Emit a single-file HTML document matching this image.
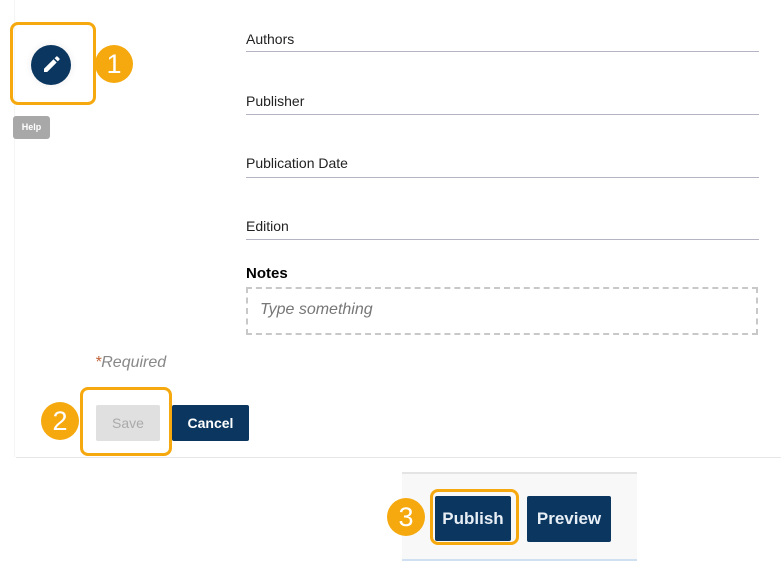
<!DOCTYPE html>
<html><head><style>
body{margin:0;width:781px;height:561px;background:#fff;font-family:"Liberation Sans",sans-serif;position:relative;overflow:hidden}
.a{position:absolute}
.lbl{position:absolute;left:246px;font-size:14px;color:#222}
.ln{position:absolute;left:246px;width:513px;height:1px;background:#b4b4c2}
.badge{position:absolute;width:38px;height:38px;border-radius:50%;background:#f6a90f;color:#fff;font-size:27px;text-align:center;line-height:38px}
.ob{position:absolute;border:3px solid #f6a90f;border-radius:8px}
</style></head><body>
<div class="a" style="left:14px;top:0;width:1px;height:457px;background:#f5f5f5"></div>
<div class="a" style="left:16px;top:457px;width:765px;height:1px;background:#e6e6e6"></div>
<div class="ob" style="left:10px;top:22px;width:80px;height:77px"></div>
<div class="a" style="left:31px;top:45px;width:40px;height:40px;border-radius:50%;background:#0a365f;box-shadow:0 0 8px rgba(0,0,0,.08)">
<svg width="40" height="40" viewBox="0 0 40 40"><path d="M13 27v-3.2l9.5-9.5 3.2 3.2L16.2 27z M23.6 13.2l1.6-1.6a1 1 0 0 1 1.4 0l1.8 1.8a1 1 0 0 1 0 1.4l-1.6 1.6z" fill="#fff"/></svg></div>
<div class="badge" style="left:95px;top:45px">1</div>
<div class="a" style="left:13px;top:116px;width:37px;height:23px;background:#a8a8a8;border-radius:3px;color:#fff;font-size:9px;font-weight:bold;text-align:center;line-height:23px">Help</div>
<div class="lbl" style="top:31px">Authors</div><div class="ln" style="top:51px"></div>
<div class="lbl" style="top:93px">Publisher</div><div class="ln" style="top:114px"></div>
<div class="lbl" style="top:155px">Publication Date</div><div class="ln" style="top:177px"></div>
<div class="lbl" style="top:218px">Edition</div><div class="ln" style="top:239px"></div>
<div class="lbl" style="top:265px;font-weight:bold;font-size:15px;color:#000">Notes</div>
<div class="a" style="left:246px;top:287px;width:508px;height:44px;border:2px dashed #c8c8c8;"></div>
<div class="a" style="left:260px;top:301px;font-size:16px;font-style:italic;color:#777">Type something</div>
<div class="a" style="left:95px;top:354px;font-size:16px;font-style:italic;color:#888"><span style="color:#c0623a">*</span>Required</div>
<div class="ob" style="left:80px;top:387px;width:86px;height:63px"></div>
<div class="a" style="left:96px;top:405px;width:64px;height:36px;background:#e0e0e0;color:#aaa;font-size:14px;text-align:center;line-height:36px;border-radius:2px">Save</div>
<div class="a" style="left:172px;top:405px;width:77px;height:36px;background:#0a365f;color:#fff;font-size:14px;font-weight:bold;text-align:center;line-height:36px;border-radius:2px">Cancel</div>
<div class="badge" style="left:41px;top:402px">2</div>
<div class="a" style="left:402px;top:472px;width:235px;height:85px;background:#f8f8f8;border-top:2px solid #e4e4e4;border-bottom:2px solid #cfe0f0"></div>
<div class="ob" style="left:430px;top:489px;width:83px;height:50px"></div>
<div class="a" style="left:435px;top:496px;width:76px;height:45px;background:#0a365f;color:#e8eef5;font-size:17px;font-weight:bold;text-align:center;line-height:45px;border-radius:2px">Publish</div>
<div class="a" style="left:527px;top:496px;width:84px;height:46px;background:#0a365f;color:#e8eef5;font-size:17px;font-weight:bold;text-align:center;line-height:46px;border-radius:2px">Preview</div>
<div class="badge" style="left:387px;top:498px">3</div>
</body></html>
